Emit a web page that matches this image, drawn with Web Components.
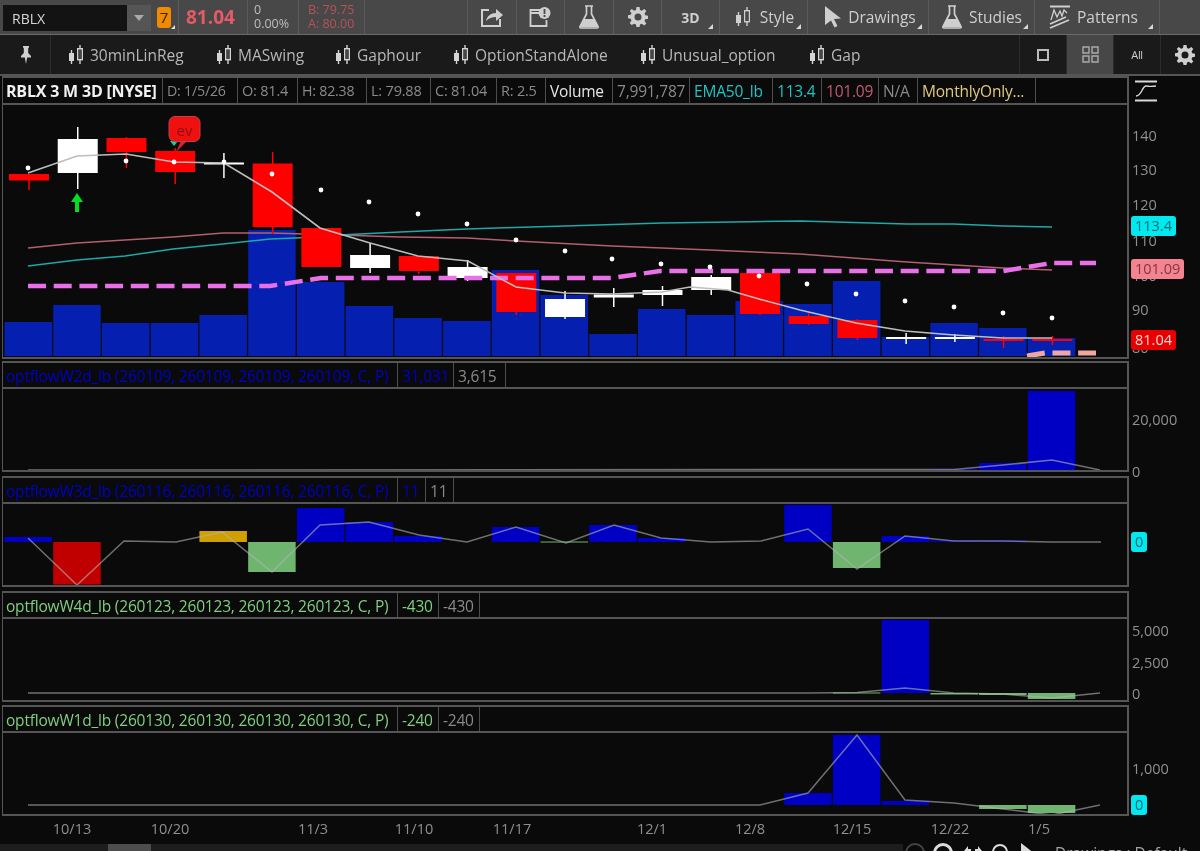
<!DOCTYPE html>
<html>
<head>
<meta charset="utf-8">
<title>RBLX chart</title>
<style>
    html, body { margin: 0; background: #0a0a0a; height: 851px; overflow: hidden; }
    body { font-family: "Open Sans", "Liberation Sans", sans-serif; color: #b5b5b5; }
</style>
</head>
<body>
<ts-window>
    <ts-topbar></ts-topbar>
    <ts-linkbar></ts-linkbar>
    <ts-charts></ts-charts>
    <ts-dates></ts-dates>
    <ts-statusbar></ts-statusbar>
</ts-window>

<script>
const ICONS = {
    candle: `<svg width="16" height="20" viewBox="0 0 16 20"><path d="M3.5 5v14" stroke="currentColor" stroke-width="1.4"/><rect x="1" y="8" width="5" height="8" fill="currentColor"/><path d="M12 0v19" stroke="currentColor" stroke-width="1.4"/><rect x="9.7" y="3.7" width="4.6" height="11" fill="#000" fill-opacity=".55" stroke="currentColor" stroke-width="1.4"/></svg>`,
    share: `<svg width="24" height="22" viewBox="0 0 24 22"><path d="M9 4H2v16h18v-7" fill="none" stroke="currentColor" stroke-width="2"/><path d="M6 15c1-5 5-8 10-8V3l7 6-7 6v-4c-4 0-7 1-10 4z" fill="currentColor"/></svg>`,
    alert: `<svg width="22" height="22" viewBox="0 0 22 22"><path d="M11 4H1.500v16h16v-6M1.500 7H10" fill="none" stroke="currentColor" stroke-width="1.800"/><circle cx="15.500" cy="7" r="6" fill="currentColor"/><path d="M15.500 3v5M15.500 9v2" stroke="#4a4a4a" stroke-width="1.800"/></svg>`,
    flask: `<svg width="22" height="24" viewBox="0 0 22 24"><path d="M7 1h8M8.500 1v8L2 21.500q-.5 1.500 1 1.500h16q1.500 0 1-1.500L13.500 9V1" fill="none" stroke="currentColor" stroke-width="1.700"/><path d="M6 14h10l4 8H2z" fill="currentColor"/></svg>`,
    gear: `<svg width="20" height="20" viewBox="0 0 20 20"><path fill="currentColor" fill-rule="evenodd" d="M8.500 0h3l.5 3 1.800.8L16.300 2l2 2-1.800 2.500.8 1.800 2.700.5v3l-2.700.5-.8 1.800 1.800 2.400-2 2-2.500-1.800-1.800.8-.5 2.500h-3l-.5-2.500-1.800-.8L3.700 18l-2-2 1.800-2.400-.8-1.800L0 11.300v-3l2.700-.5.8-1.800L1.700 4l2-2 2.500 1.800L8 3zM10 6.500a3.500 3.500 0 1 0 0 7 3.500 3.500 0 0 0 0-7z"/></svg>`,
    cursor: `<svg width="18" height="22" viewBox="0 0 18 22"><path d="M1 0l16 12.500-7 .5 3.500 7-3 1.500-3.500-7L1 19z" fill="currentColor"/></svg>`,
    pattern: `<svg width="22" height="24" viewBox="0 0 22 24"><path d="M1 1.500h20" stroke="currentColor" stroke-width="2"/><path d="M2 15L5 5l3 7 3-6 2 5 2-6 3 3" fill="none" stroke="currentColor" stroke-width="1.300"/><path d="M1 23l19-8M1 19l16-7" fill="none" stroke="currentColor" stroke-width="1.800"/></svg>`,
    pin: `<svg width="12" height="20" viewBox="0 0 12 20"><path d="M3 1h6v1.500L8.200 3v5L11 11v1.500H7.200L6 19l-1.200-6.500H1V11l2.800-3V3L3 2.500z" fill="currentColor"/></svg>`,
    square: `<svg width="12" height="12" viewBox="0 0 12 12"><rect x="1" y="1" width="10" height="10" fill="none" stroke="currentColor" stroke-width="2"/></svg>`,
    grid: `<svg width="17" height="17" viewBox="0 0 17 17"><path d="M1 1h6v6H1zM10 1h6v6h-6zM1 10h6v6H1zM10 10h6v6h-6z" fill="none" stroke="currentColor" stroke-width="1.400"/></svg>`,
    style: `<svg width="24" height="24" viewBox="0 0 24 24"><path d="M1 2.500h22M1 21.500h22" stroke="currentColor" stroke-width="2"/><path d="M2 17c6 0 6-10 10-10 3 0 3 1 10 0" fill="none" stroke="currentColor" stroke-width="1.400"/></svg>`,
    arrows: `<svg width="20" height="20" viewBox="0 0 20 20"><path d="M1 6l4-5v3h3v4H5v3zM19 6l-4-5v3h-3v4h3v3z" fill="currentColor"/></svg>`
};

// flat toolbar cell; width, corner triangle and label come from attributes/slot
class TsCell extends HTMLElement {
    constructor() {
        super();
        this.attachShadow({mode: 'open'});
        const icon = this.getAttribute('icon');
        this.shadowRoot.innerHTML = `
            <style>
                :host {
                    display: flex;
                    position: relative;
                    box-sizing: border-box;
                    align-items: center;
                    justify-content: center;
                    gap: ${this.getAttribute('gap') || 6}px;
                    height: 100%;
                    flex: none;
                    width: ${this.getAttribute('w') || 'auto'};
                    padding: ${this.getAttribute('pad') || 0};
                    color: ${this.getAttribute('ink') || '#cfcfcf'};
                    font-size: 15.500px;
                    border-right: 1px solid ${this.getAttribute('line') || '#5a5a5a'};
                    background: ${this.getAttribute('bg') || 'none'};
                }
                .icon { display: flex; }
                .corner {
                    position: absolute;
                    right: 6px;
                    bottom: 5px;
                    border-left: 5px solid transparent;
                    border-bottom: 5px solid #d8d8d8;
                }
            </style>
            ${icon ? `<span class="icon">${ICONS[icon]}</span>` : ''}
            <slot></slot>
            ${this.hasAttribute('corner') ? '<span class="corner"></span>' : ''}
        `;
    }
}
customElements.define('ts-cell', TsCell);

class TsTopbar extends HTMLElement {
    constructor() {
        super();
        this.attachShadow({mode: 'open'});
        this.shadowRoot.innerHTML = `
            <style>
                :host {
                    display: flex;
                    box-sizing: border-box;
                    height: 35px;
                    background: #484848;
                    border-bottom: 1px solid #6a6a6a;
                    font-size: 12.500px;
                }
                .symbol {
                    display: flex;
                    flex: none;
                    box-sizing: border-box;
                    width: 148px;
                    height: 26px;
                    margin: 5px 0 0 3px;
                    align-items: center;
                    justify-content: space-between;
                    padding-left: 9px;
                    background: #131313;
                    color: #d6d6d6;
                    font-size: 14px;
                }
                .drop {
                    display: flex;
                    width: 24px;
                    height: 100%;
                    align-items: center;
                    justify-content: center;
                    background: #555;
                }
                .drop i {
                    border: 5px solid transparent;
                    border-top: 6px solid #aaa;
                    border-bottom: 0;
                }
                .seven {
                    position: relative;
                    flex: none;
                    box-sizing: border-box;
                    width: 14px;
                    height: 21px;
                    margin: 7px 0 0 6px;
                    border-radius: 3px;
                    background: #f08a00;
                    color: #3a2000;
                    font-size: 15px;
                    line-height: 21px;
                    text-align: center;
                }
                .seven-corner {
                    flex: none;
                    width: 0;
                    height: 0;
                    margin: 25px 3px 0 0;
                    border-left: 4px solid transparent;
                    border-bottom: 4px solid #ddd;
                }
                .last {
                    flex: none;
                    box-sizing: border-box;
                    width: 70px;
                    padding-left: 7px;
                    color: #e45a66;
                    font-size: 19px;
                    font-weight: 700;
                    line-height: 35px;
                    border-left: 1px solid #5a5a5a;
                    border-right: 1px solid #5a5a5a;
                }
                .stack {
                    flex: none;
                    box-sizing: border-box;
                    padding: 3px 0 0 6px;
                    line-height: 14px;
                    border-right: 1px solid #5a5a5a;
                }
                .chg { width: 51px; color: #bdbdbd; }
                .quote { width: 66px; padding-left: 9px; color: #b8515b; }
                .fill { flex: none; width: 102px; border-right: 1px solid #5a5a5a; }
            </style>
            <div class="symbol">RBLX<span class="drop"><i></i></span></div>
            <div class="seven">7</div>
            <span class="seven-corner"></span>
            <div class="last">81.04</div>
            <div class="stack chg">0<br>0.00%</div>
            <div class="stack quote">B: 79.75<br>A: 80.00</div>
            <div class="fill"></div>
            <ts-cell w="48.500px" icon="share"></ts-cell>
            <ts-cell w="48.500px" icon="alert"></ts-cell>
            <ts-cell w="49px" icon="flask"></ts-cell>
            <ts-cell w="48px" icon="gear"></ts-cell>
            <ts-cell w="58px" corner><b style="font-size:14px">3D</b></ts-cell>
            <ts-cell w="88px" corner icon="candle" gap="9" pad="0 0 0 2px">Style</ts-cell>
            <ts-cell w="121px" corner icon="cursor" pad="0 0 0 4px">Drawings</ts-cell>
            <ts-cell w="106px" corner icon="flask">Studies</ts-cell>
            <ts-cell w="125px" corner icon="pattern" pad="0 7px 0 0">Patterns</ts-cell>
        `;
    }
}
customElements.define('ts-topbar', TsTopbar);

class TsLinkbar extends HTMLElement {
    constructor() {
        super();
        this.attachShadow({mode: 'open'});
        const links = [
            ['30minLinReg', 148], ['MASwing', 119], ['Gaphour', 118],
            ['OptionStandAlone', 187], ['Unusual_option', 169], ['Gap', 61]
        ];
        this.shadowRoot.innerHTML = `
            <style>
                :host {
                    display: flex;
                    box-sizing: border-box;
                    height: 41px;
                    padding-left: 2px;
                    background: #1a1a1a;
                    border-bottom: 2px solid #555;
                }
                .links { display: flex; flex: 1; align-items: center; padding-left: 17px; }
                .link {
                    display: flex;
                    flex: none;
                    align-items: center;
                    gap: 6px;
                    color: #b8b8b8;
                    font-size: 15.500px;
                }
                .link svg { color: #d4d4d4; }
            </style>
            <ts-cell w="49px" icon="pin" line="#2c2c2c"></ts-cell>
            <div class="links">
                ${links.map(([name, w]) => `<div class="link" style="width:${w}px">${ICONS.candle}${name}</div>`).join('')}
            </div>
            <ts-cell w="48px" icon="square" ink="#bbb" line="#2c2c2c" style="border-left:1px solid #2c2c2c"></ts-cell>
            <ts-cell w="47px" icon="grid" ink="#aaa" bg="#474747" line="#2c2c2c"></ts-cell>
            <ts-cell w="47px" line="#2c2c2c"><span style="font-size:11px;letter-spacing:-.4px">All</span></ts-cell>
            <ts-cell w="39px" icon="gear" pad="0 0 0 10px" line="transparent"></ts-cell>
        `;
    }
}
customElements.define('ts-linkbar', TsLinkbar);

// one box of a study legend
class LegendCell extends HTMLElement {
    constructor() {
        super();
        this.attachShadow({mode: 'open'});
        this.shadowRoot.innerHTML = `
            <style>
                :host {
                    display: block;
                    box-sizing: border-box;
                    flex: none;
                    width: ${this.getAttribute('w')}px;
                    height: 100%;
                    padding-left: ${this.getAttribute('pad') || 4}px;
                    border-right: 1px solid #4d4d4d;
                    color: ${this.getAttribute('color') || '#8a8a8a'};
                    font-size: ${this.getAttribute('fs') || 15.5}px;
                    line-height: 26px;
                    white-space: nowrap;
                    overflow: hidden;
                    letter-spacing: -0.200px;
                }
            </style>
            <slot></slot>
        `;
    }
}
customElements.define('legend-cell', LegendCell);

// ---- chart data, in page coordinates ----
const CX = i => 28.5 + i * 48.73;
const VOL = [322, 305, 323, 323, 315, 230, 282, 306, 318, 321, 270, 295, 334, 309, 315, 301, 304, 281, 337, 323, 328, 338];
const R = '#ff0000', W = '#ffffff';
// colour, body top, body bottom, wick top, wick bottom
const CANDLES = [
    [R, 174, 180.500, 174, 190], [W, 139, 173, 127, 189], [R, 138, 152, 137, 168], [R, 151, 172, 148, 184],
    [W, 162.500, 164.500, 153, 178], [R, 163.500, 227, 152, 234], [R, 228, 267, 228, 267], [W, 255, 268, 243, 273],
    [R, 256, 271, 256, 274], [W, 267, 278, 260, 281], [R, 273, 312, 273, 315], [W, 299, 317, 291, 319],
    [W, 294.500, 297.500, 288, 307], [W, 290, 295, 286, 306], [W, 277, 290, 275, 295], [R, 273, 314, 273, 315],
    [R, 316, 324, 312, 325], [R, 320, 338, 319, 340], [W, 337, 339, 333, 344], [W, 337, 339, 334, 342],
    [R, 339, 341, 336, 348], [R, 339, 341, 336, 345]
];
const DOTS = [[28, 168], [126, 161], [174, 162], [224, 162], [272, 174], [321, 190], [369, 202], [418, 214], [467, 224], [516, 240],
    [565, 251], [612, 259], [661, 264], [710, 267], [759, 276], [807, 284], [856, 294], [905, 301], [954, 307], [1003, 313], [1052, 318]];
const GREY = '28,173 77,156 126,154 174,162 224,163 272,192 320,228 370,243 418,256 468,261 516,287 565,293 612,294 662,292 690,287 728,290 759,299 800,310 856,323 905,331 954,335 1003,338 1052,338';
const PINK = '28,248 77,243 125,240 173,237 223,233 270,233 340,235 400,237 467,238 516,241 612,246 662,248 710,250 800,254 907,262 1003,268 1052,270';
const TEAL = '28,266 77,260 125,256 173,249 223,244 270,239 320,237 340,235 400,232 467,229 565,226 662,223 800,221 907,224 953,224 1003,226 1052,227';
const DASH = '28,286 270,286 321,278 612,278 660,271 1003,271 1052,263 1096,263';

const BLUE = '#0000c4', GREEN = '#6fb56f', RED = '#c00000', GOLD = '#cfa000';
const bar = (i, top, bottom, fill) => `<rect x="${CX(i) - 24}" y="${top}" width="47.500" height="${bottom - top}" fill="${fill}"/>`;
const thinLine = pts => `<polyline points="${pts}" fill="none" stroke="#b4b4b4" stroke-opacity=".6" stroke-width="1.500"/>`;

function mainPlot() {
    let s = VOL.map((top, i) => bar(i, top, 356, '#0520b0')).join('');
    s += `<polyline points="${PINK}" fill="none" stroke="#b0606f" stroke-width="1.500"/>`;
    s += `<polyline points="${TEAL}" fill="none" stroke="#1fa8a8" stroke-width="1.500"/>`;
    CANDLES.forEach(([c, t, b, wt, wb], i) => {
        const x = CX(i) + 0.5;
        s += `<path d="M${x} ${wt}V${wb}" stroke="${c}" stroke-width="1.500"/>`;
        s += `<rect x="${x - 20}" y="${t}" width="40" height="${b - t}" fill="${c}"/>`;
    });
    s += `<polyline points="${DASH}" fill="none" stroke="#ea70ea" stroke-width="4.500" stroke-dasharray="18 7.700"/>`;
    s += `<polyline points="1027,356 1045,353 1096,353" fill="none" stroke="#efa8a0" stroke-width="5" stroke-dasharray="18 7.700"/>`;
    s += `<polyline points="${GREY}" fill="none" stroke="#bdbdbd" stroke-width="1.600"/>`;
    s += DOTS.map(([x, y]) => `<circle cx="${x}" cy="${y}" r="2.400" fill="#fff"/>`).join('');
    s += `<path d="M77 193l6 9h-4v10h-4v-10h-4z" fill="#00e020"/>`;
    s += `<path d="M170 141l4 5 4-5z" fill="#20c8a0"/>`;
    s += `<path d="M176 152l5-11h6z" fill="#d8242a"/>`;
    s += `<rect x="169" y="116.500" width="31" height="25" rx="6" fill="#f01010" stroke="#c04048"/>`;
    s += `<text x="184.500" y="136" text-anchor="middle" fill="#8a0f14" font-size="15">ev</text>`;
    return s;
}

const W2D = [bar(19, 469, 470.500, BLUE), bar(20, 463, 470.500, BLUE), bar(21, 391, 470.500, BLUE),
    thinLine('28,470 954,469.500 1003,465 1052,460 1100,470')].join('');
const W3D = [bar(0, 537, 542, BLUE), bar(1, 542, 584.500, RED), bar(4, 531, 542, GOLD), bar(5, 542, 572, GREEN),
    bar(6, 508, 542, BLUE), bar(7, 522, 542, BLUE), bar(8, 536, 542, BLUE), bar(10, 527, 542, BLUE),
    bar(11, 541.500, 542.500, GREEN), bar(12, 525, 542, BLUE), bar(13, 538, 542, BLUE), bar(16, 505, 542, BLUE),
    bar(17, 542, 568, GREEN), bar(18, 536, 542, BLUE), bar(19, 540.500, 542, BLUE), bar(20, 540.500, 542, BLUE),
    thinLine('28,538 77,585 124,541 176,542 222,532 272,572 320,525 369,522 419,535 467,542 516,527 566,543 614,525 661,538 711,542 761,541 808,529 857,569 905,536 954,541 1002,541 1052,542 1101,542')].join('');
const W4D = [bar(18, 620, 693, BLUE), bar(17, 692.500, 693.500, GREEN), bar(19, 693, 694.500, GREEN), bar(20, 693, 695, GREEN), bar(21, 693, 699, GREEN),
    thinLine('28,693 808,693 857,692.500 905,688 954,693 1003,694 1052,698 1100,693')].join('');
const W1D = [bar(16, 793, 805, BLUE), bar(17, 735, 805, BLUE), bar(18, 801, 805, BLUE), bar(20, 805, 809, GREEN), bar(21, 805, 813, GREEN),
    thinLine('28,805 760,805 808,793 857,735 905,800 954,803 1003,809 1052,815 1100,805')].join('');

// pane: legend cells come in through the slot, plot is drawn in page coordinates
class ChartPane extends HTMLElement {
    set plot(svg) { this.shadowRoot.querySelector('g').innerHTML = svg; }
    constructor() {
        super();
        this.attachShadow({mode: 'open'});
        const top = +this.getAttribute('plot-top');
        const h = +this.getAttribute('plot-h');
        this.shadowRoot.innerHTML = `
            <style>
                :host {
                    display: block;
                    box-sizing: border-box;
                    width: 1127px;
                    margin-left: 2px;
                    border: 1px solid #555;
                    border-width: 0 2px 2px 1px;
                }
                .legend {
                    display: flex;
                    box-sizing: border-box;
                    height: ${this.getAttribute('legend-h') || 28}px;
                    border-top: 2px solid #555;
                    border-bottom: 2px solid #555;
                }
                svg { display: block; font-family: "Open Sans", sans-serif; }
            </style>
            <div class="legend"><slot></slot></div>
            <svg width="1124" height="${h}" viewBox="3 ${top} 1124 ${h}"><g></g></svg>
        `;
    }
}
customElements.define('chart-pane', ChartPane);

// right hand scale: ticks and value tags sit at their price position
class PriceAxis extends HTMLElement {
    constructor() {
        super();
        this.attachShadow({mode: 'open'});
        this.shadowRoot.innerHTML = `
            <style>
                :host { display: block; position: absolute; left: 1130px; top: 0; width: 70px; height: 851px; }
                span {
                    position: absolute;
                    transform: translateY(-50%);
                    white-space: nowrap;
                    color: #8f8f8f;
                    font-size: 14.500px;
                    line-height: 20px;
                    left: 2px;
                }
                span.tag {
                    left: 1px;
                    box-sizing: border-box;
                    padding: 0 4px;
                    border-radius: 3px;
                    height: 20px;
                }
                svg { position: absolute; left: 4px; top: 79px; }
            </style>
            <svg width="24" height="24" viewBox="0 0 24 24" style="color:#d8d8d8">${ICONS.style.replace(/<\/?svg[^>]*>/g, '')}</svg>
            ${[[136, '140'], [170, '130'], [205, '120'], [241, '110'], [276, '100'], [310, '90'], [348, '80'],
               [420, '20,000'], [472, '0'], [631, '5,000'], [663, '2,500'], [694, '0'], [769, '1,000']]
                .map(([y, t]) => `<span style="top:${y}px">${t}</span>`).join('')}
            ${[[226, '113.4', '#00e8f0', '#0b6a70'], [269, '101.09', '#f4828f', '#7b3a42'], [340, '81.04', '#e80000', '#ffd8d8'],
               [541.500, '0', '#00e8f0', '#0b6a70'], [804.500, '0', '#00e8f0', '#0b6a70']]
                .map(([y, t, bg, c]) => `<span class="tag" style="top:${y}px;background:${bg};color:${c}">${t}</span>`).join('')}
        `;
    }
}
customElements.define('price-axis', PriceAxis);

class TsCharts extends HTMLElement {
    constructor() {
        super();
        this.attachShadow({mode: 'open'});
        const title = (t, val, val2, c, w1, w2) => `
            <legend-cell w="395" color="${c}" pad="3">${t}</legend-cell>
            <legend-cell w="${w1}" color="${c}">${val}</legend-cell>
            <legend-cell w="${w2}">${val2}</legend-cell>`;
        this.shadowRoot.innerHTML = `
            <style>
                :host { display: block; }
            </style>
            <chart-pane id="main" plot-top="105" plot-h="252" legend-h="29">
                <legend-cell w="160" color="#f0f0f0" pad="3" fs="16"><b>RBLX 3 M 3D [NYSE]</b></legend-cell>
                <legend-cell w="75" fs="14.2">D: 1/5/26</legend-cell>
                <legend-cell w="60" fs="14.5">O: 81.4</legend-cell>
                <legend-cell w="69" fs="14.2">H: 82.38</legend-cell>
                <legend-cell w="64" fs="14.5">L: 79.88</legend-cell>
                <legend-cell w="66" fs="14.5">C: 81.04</legend-cell>
                <legend-cell w="49" fs="14.5">R: 2.5</legend-cell>
                <legend-cell w="67" color="#e6e6e6">Volume</legend-cell>
                <legend-cell w="77">7,991,787</legend-cell>
                <legend-cell w="83" color="#1fc4c4">EMA50_lb</legend-cell>
                <legend-cell w="49" color="#1fc4c4">113.4</legend-cell>
                <legend-cell w="57" color="#c45a70">101.09</legend-cell>
                <legend-cell w="39">N/A</legend-cell>
                <legend-cell w="118" color="#e0c880">MonthlyOnly...</legend-cell>
            </chart-pane>
            <chart-pane id="w2d" plot-top="389" plot-h="81" style="margin-top:2px">
                ${title('optflowW2d_lb (260109, 260109, 260109, 260109, C, P)', '31,031', '3,615', '#0000c8', 56, 52)}
            </chart-pane>
            <chart-pane id="w3d" plot-top="504" plot-h="81" style="margin-top:4px">
                ${title('optflowW3d_lb (260116, 260116, 260116, 260116, C, P)', '11', '11', '#0000c8', 28, 28)}
            </chart-pane>
            <chart-pane id="w4d" plot-top="619" plot-h="81" style="margin-top:4px">
                ${title('optflowW4d_lb (260123, 260123, 260123, 260123, C, P)', '-430', '-430', '#7fd07f', 41, 41)}
            </chart-pane>
            <chart-pane id="w1d" plot-top="733" plot-h="81" style="margin-top:3px">
                ${title('optflowW1d_lb (260130, 260130, 260130, 260130, C, P)', '-240', '-240', '#7fd07f', 41, 41)}
            </chart-pane>
            <price-axis></price-axis>
        `;
        const r = this.shadowRoot;
        r.querySelector('#main').plot = mainPlot();
        r.querySelector('#w2d').plot = W2D;
        r.querySelector('#w3d').plot = W3D;
        r.querySelector('#w4d').plot = W4D;
        r.querySelector('#w1d').plot = W1D;
    }
}
customElements.define('ts-charts', TsCharts);

class TsDates extends HTMLElement {
    constructor() {
        super();
        this.attachShadow({mode: 'open'});
        const dates = [[72, '10/13'], [170, '10/20'], [313, '11/3'], [414, '11/10'], [512, '11/17'],
            [652, '12/1'], [750, '12/8'], [852, '12/15'], [950, '12/22'], [1039, '1/5']];
        this.shadowRoot.innerHTML = `
            <style>
                :host { display: block; position: relative; height: 27px; }
                span {
                    position: absolute;
                    top: 3px;
                    transform: translateX(-50%);
                    color: #8f8f8f;
                    font-size: 14.500px;
                    line-height: 20px;
                }
            </style>
            ${dates.map(([x, t]) => `<span style="left:${x}px">${t}</span>`).join('')}
        `;
    }
}
customElements.define('ts-dates', TsDates);

class TsStatusbar extends HTMLElement {
    constructor() {
        super();
        this.attachShadow({mode: 'open'});
        this.shadowRoot.innerHTML = `
            <style>
                :host { display: flex; height: 8px; overflow: hidden; }
                .track { flex: none; width: 903px; margin-top: 1px; background: #1d1d1d; padding-left: 108px; box-sizing: border-box; }
                .thumb { width: 43px; height: 100%; background: #4d4d4d; }
                .rest { display: flex; flex: 1; align-items: flex-start; padding-left: 2px; color: #dcdcdc; }
                .circle { flex: none; width: 20px; height: 20px; border: 2px solid currentColor; border-radius: 50%; box-sizing: border-box; }
                .dim { color: #444; margin-right: 8px; }
                .thick { border-width: 3px; margin-right: 10px; }
                .arrows { display: flex; flex: none; margin: 2px 9px 0 0; }
                .small { width: 16px; height: 16px; margin: 1px 12px 0 0; }
                .pointer { display: flex; flex: none; }
                .text { color: #a5a5a5; font-size: 15.500px; line-height: 20px; white-space: nowrap; margin-left: 17px; }
            </style>
            <div class="track"><div class="thumb"></div></div>
            <div class="rest">
                <span class="circle dim"></span>
                <span class="circle thick"></span>
                <span class="arrows">${ICONS.arrows}</span>
                <span class="circle small"></span>
                <span class="pointer">${ICONS.cursor}</span>
                <span class="text">Drawings : Default</span>
            </div>
        `;
    }
}
customElements.define('ts-statusbar', TsStatusbar);

class TsWindow extends HTMLElement {
    constructor() {
        super();
        this.attachShadow({mode: 'open'});
        this.shadowRoot.innerHTML = `
            <style>
                /* the source picture is a soft capture */
                :host { display: block; position: relative; width: 1200px; height: 851px; overflow: hidden; filter: blur(.35px); }
            </style>
            <slot></slot>
        `;
    }
}
customElements.define('ts-window', TsWindow);
</script>
</body>
</html>
